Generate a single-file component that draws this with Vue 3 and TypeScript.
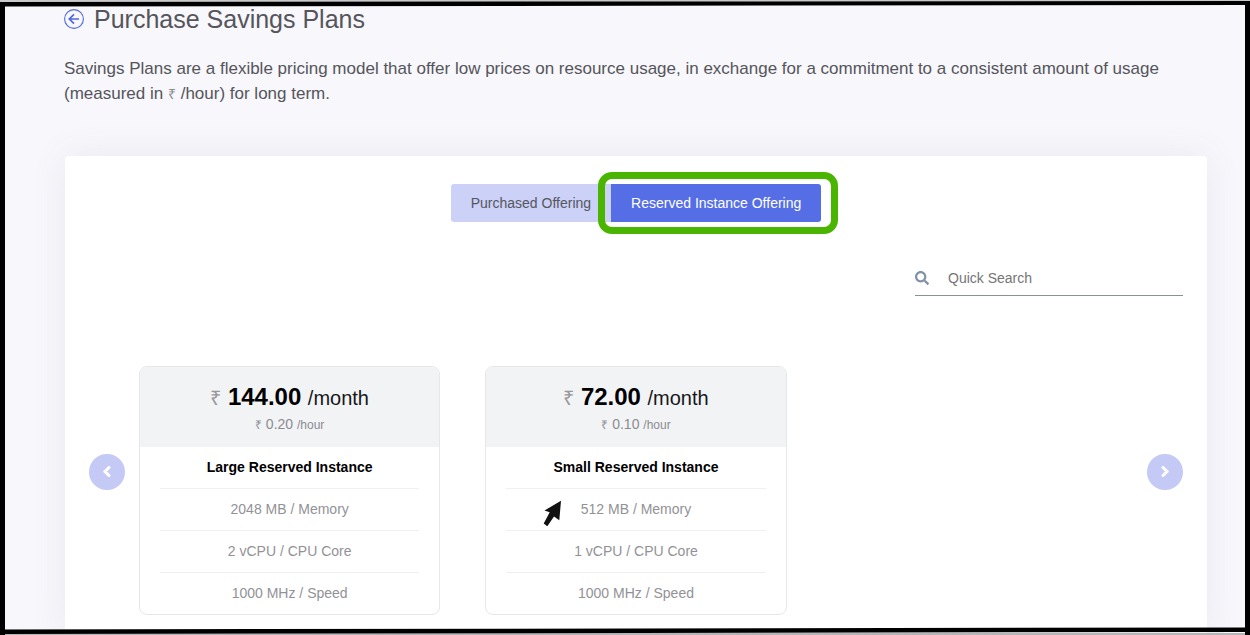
<script setup lang="ts">
import { ref, computed } from 'vue'

interface Plan {
  name: string
  monthly: string
  hourly: string
  specs: string[]
}

const plans: Plan[] = [
  {
    name: 'Large Reserved Instance',
    monthly: '144.00',
    hourly: '0.20',
    specs: ['2048 MB / Memory', '2 vCPU / CPU Core', '1000 MHz / Speed'],
  },
  {
    name: 'Small Reserved Instance',
    monthly: '72.00',
    hourly: '0.10',
    specs: ['512 MB / Memory', '1 vCPU / CPU Core', '1000 MHz / Speed'],
  },
]

const tabs = ['Purchased Offering', 'Reserved Instance Offering']
const activeTab = ref(tabs[1])
const query = ref('')
const visiblePlans = computed(() =>
  plans.filter((p) => p.name.toLowerCase().includes(query.value.trim().toLowerCase())),
)
</script>

<template>
  <div class="page">
    <main class="content">
      <header class="heading">
        <a class="back" href="#" aria-label="Back">
          <svg viewBox="0 0 20 20" width="20" height="20" fill="none" stroke="#5168dc">
            <circle cx="10" cy="10" r="9.4" stroke-width="1.1" />
            <path d="M15 10H5.8M10 5.3L5.3 10l4.7 4.7" stroke-width="1.7" />
          </svg>
        </a>
        <h1>Purchase Savings Plans</h1>
      </header>
      <p class="intro">
        Savings Plans are a flexible pricing model that offer low prices on resource usage, in exchange for a
        commitment to a consistent amount of usage (measured in <span class="rupee">₹</span> /hour) for long term.
      </p>

      <section class="panel">
        <div class="tabs">
          <button
            v-for="tab in tabs"
            :key="tab"
            type="button"
            class="tab"
            :class="{ active: tab === activeTab }"
            :aria-pressed="tab === activeTab"
            @click="activeTab = tab"
          >
            {{ tab }}
          </button>
        </div>

        <div class="search">
          <label for="quick-search" aria-label="Quick Search">
            <svg viewBox="0 0 512 512" width="14" height="14" fill="#8391a7">
              <path
                d="M505 442.700L405.300 343c-4.500-4.500-10.600-7-17-7H372c27.600-35.300 44-79.700 44-128C416 93.100 322.900 0 208 0S0 93.100 0 208s93.100 208 208 208c48.300 0 92.700-16.400 128-44v16.300c0 6.400 2.500 12.500 7 17l99.700 99.700c9.400 9.400 24.600 9.400 33.900 0l28.300-28.300c9.400-9.400 9.400-24.600.1-34zM208 336c-70.700 0-128-57.200-128-128 0-70.700 57.200-128 128-128 70.700 0 128 57.200 128 128 0 70.700-57.200 128-128 128z"
              />
            </svg>
          </label>
          <input id="quick-search" v-model="query" type="text" placeholder="Quick Search" />
        </div>

        <div class="carousel">
          <button type="button" class="arrow" aria-label="Previous plans">
            <svg viewBox="0 0 12 12" width="12" height="12" fill="none" stroke="#fff" stroke-width="3" stroke-linecap="round">
              <path d="M8 1.500L4 5.500l4 4" />
            </svg>
          </button>
          <div class="plans">
            <article v-for="plan in visiblePlans" :key="plan.name" class="plan">
              <div class="price">
                <div class="monthly">
                  <span class="symbol">₹</span> <strong>{{ plan.monthly }}</strong> <span>/month</span>
                </div>
                <div class="hourly">
                  <span class="small">₹</span> {{ plan.hourly }} <span class="small">/hour</span>
                </div>
              </div>
              <ul class="specs">
                <li class="name">{{ plan.name }}</li>
                <li v-for="spec in plan.specs" :key="spec">{{ spec }}</li>
              </ul>
            </article>
          </div>
          <button type="button" class="arrow" aria-label="Next plans">
            <svg viewBox="0 0 12 12" width="12" height="12" fill="none" stroke="#fff" stroke-width="3" stroke-linecap="round">
              <path d="M4 1.500l4 4-4 4" />
            </svg>
          </button>
        </div>
      </section>
    </main>

    <div class="highlight" aria-hidden="true"></div>
    <svg class="pointer" viewBox="0 0 20 27" width="20" height="27" aria-hidden="true">
      <path d="M18 0.700L1.500 10.500l5.200 1.700L0.700 23.500l3.600 2.800L11 16.500l5.300 3.700z" fill="#111" />
    </svg>
    <svg class="frame" viewBox="0 0 1250 635" preserveAspectRatio="none" aria-hidden="true">
      <path d="M0 0H1250V2H0z" fill="#c9c9cc" />
      <path d="M0 633H1250V635H0z" fill="#b5b5b8" />
      <path d="M0 2L1250 1V5L0 6.500z" />
      <path d="M0 629.500L1250 627.500V632L0 634z" />
      <path d="M0 2H5V635H0zM1245 1H1250V635H1245z" />
    </svg>
  </div>
</template>

<style>
body {
  margin: 0;
  background: #f7f7fc;
}
</style>

<style scoped>
.page {
  position: relative;
  box-sizing: border-box;
  height: 100vh;
  overflow: hidden;
  background: #f7f7fc;
  color: #55555b;
  font-family: 'Liberation Sans', Arial, sans-serif;
}

.content {
  display: flex;
  flex-direction: column;
  box-sizing: border-box;
  min-height: 100%;
  padding: 4px 43px 0 64px;
}

.heading {
  display: flex;
  align-items: center;
  gap: 10px;
  height: 30px;
}

.back {
  display: flex;
}

h1 {
  margin: 0;
  font-size: 25px;
  font-weight: 400;
  line-height: 30px;
}

.intro {
  margin: 22px 0 50px;
  font-size: 17px;
  line-height: 25px;
}

.rupee {
  color: #8c8c92;
  font-size: 14px;
  line-height: 1;
}

.panel {
  flex: 1;
  margin-left: 1px;
  padding: 28px 24px 20px;
  border-radius: 4px;
  background: #fff;
  box-shadow: 0 0 35px rgba(110, 110, 125, 0.1);
}

.tabs {
  display: flex;
  justify-content: center;
}

.tab {
  height: 38px;
  padding: 0 20px;
  border: 0;
  background: #cbd1f7;
  color: #56565e;
  font: 14px 'Liberation Sans', Arial, sans-serif;
  cursor: pointer;
}

.tab:first-child {
  border-radius: 3px 0 0 3px;
}

.tab:last-child {
  border-radius: 0 3px 3px 0;
}

.tab.active {
  background: #556ee6;
  color: #fff;
}

.search {
  display: flex;
  align-items: center;
  box-sizing: border-box;
  width: 268px;
  height: 36px;
  margin: 38px 0 70px auto;
  border-bottom: 1px solid #88909c;
}

.search label {
  display: flex;
}

.search input {
  flex: 1;
  min-width: 0;
  margin-left: 19px;
  padding: 0;
  border: 0;
  outline: 0;
  background: transparent;
  color: #505056;
  font: 14px 'Liberation Sans', Arial, sans-serif;
}

.search input::placeholder {
  color: #757575;
  opacity: 1;
}

.carousel {
  display: flex;
  align-items: flex-start;
  gap: 14px;
}

.arrow {
  display: flex;
  flex: none;
  align-items: center;
  justify-content: center;
  width: 36px;
  height: 36px;
  margin-top: 88px;
  padding: 0;
  border: 0;
  border-radius: 50%;
  background: #c4caf5;
  cursor: pointer;
}

.plans {
  display: grid;
  flex: 1;
  grid-template-columns: repeat(3, 1fr);
  gap: 45px;
}

.plan {
  overflow: hidden;
  border: 1px solid #e6e7e9;
  border-radius: 8px;
  text-align: center;
}

.price {
  box-sizing: border-box;
  height: 80px;
  padding-top: 16px;
  background: #f2f3f5;
}

.monthly {
  color: #17171a;
  font-size: 20px;
  line-height: 28px;
}

.monthly strong {
  margin: 0 1px;
  color: #000;
  font-size: 24px;
}

.symbol {
  color: #98989c;
}

.hourly {
  color: #8c8c90;
  font-size: 14px;
  line-height: 24px;
}

.small {
  font-size: 12px;
}

.specs {
  margin: 0;
  padding: 0 20px;
  list-style: none;
}

.specs li {
  height: 41px;
  border-bottom: 1px solid #f0f0f2;
  color: #929296;
  font-size: 14px;
  line-height: 41px;
}

.specs li:last-child {
  border-bottom: 0;
}

.specs .name {
  color: #000;
  font-weight: 700;
}

.highlight {
  position: absolute;
  top: 172px;
  left: 598px;
  box-sizing: border-box;
  width: 240px;
  height: 62px;
  border: 7px solid #4ab500;
  border-radius: 14px;
  pointer-events: none;
}

.pointer {
  position: absolute;
  top: 500px;
  left: 543px;
  pointer-events: none;
}

.frame {
  position: absolute;
  inset: 0;
  width: 100%;
  height: 100%;
  pointer-events: none;
}
</style>
